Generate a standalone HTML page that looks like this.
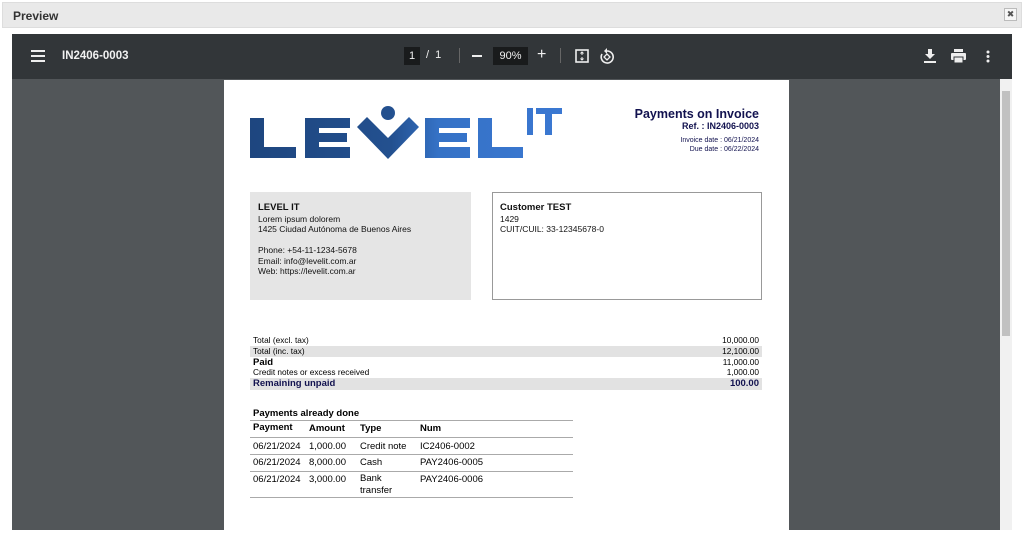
<!DOCTYPE html>
<html><head><meta charset="utf-8"><style>
*{margin:0;padding:0;box-sizing:border-box}
body{width:1024px;height:549px;background:#fff;font-family:"Liberation Sans",sans-serif;position:relative;overflow:hidden}
.top{position:absolute;left:2px;top:2px;width:1020px;height:26px;background:#e9e9e9;border:1px solid #ddd}
.top b{position:absolute;left:10px;top:6px;font-size:12px;color:#333}
.x{position:absolute;right:4px;top:5px;width:13px;height:13px;border:1px solid #bbb;background:#f7f7f7;font-size:9px;text-align:center;line-height:11px;color:#555}
.viewer{position:absolute;left:12px;top:34px;width:1000px;height:496px;background:#525659;overflow:hidden}
.tb{position:absolute;left:0;top:0;width:1000px;height:45px;background:#323639;color:#f1f1f1;font-size:12px}
.page{position:absolute;left:212px;top:46px;width:565px;height:460px;background:#fff;color:#000}
.sb{position:absolute;right:0;top:45px;width:12px;height:451px;background:#f1f1f1}
.sb i{position:absolute;left:2px;top:12px;width:8px;height:245px;background:#c1c1c1}
.a{position:absolute;font-size:8.5px;line-height:10.5px;color:#111}
.row{position:absolute;left:26px;width:512px;height:11px;font-size:8.3px;line-height:11px;padding-left:3px}
.row span{position:absolute;right:3px}
.t td{font-size:9.5px;padding:0 3px;height:17px;vertical-align:top;padding-top:2px}
</style></head><body>
<div class="top"><b>Preview</b><div class="x">✖</div></div>
<div class="viewer">
<div class="tb">
 <svg style="position:absolute;left:19px;top:16px" width="14" height="12"><rect y="0" width="14" height="2" fill="#eee"/><rect y="5" width="14" height="2" fill="#eee"/><rect y="10" width="14" height="2" fill="#eee"/></svg>
 <b style="position:absolute;left:50px;top:16px;font-size:11.5px">IN2406-0003</b>
 <div style="position:absolute;left:392px;top:13px;width:16px;height:18px;background:#191b1c;text-align:center;line-height:18px;font-size:11px">1</div>
 <div style="position:absolute;left:414px;top:15px;font-size:11px">/ &nbsp;1</div>
 <div style="position:absolute;left:447px;top:14px;width:1px;height:15px;background:#666"></div>
 <div style="position:absolute;left:460px;top:21px;width:10px;height:1.5px;background:#eee"></div>
 <div style="position:absolute;left:481px;top:13px;width:35px;height:18px;background:#191b1c;text-align:center;line-height:18px;font-size:11px">90%</div>
 <div style="position:absolute;left:525px;top:12px;font-size:16px">+</div>
 <div style="position:absolute;left:548px;top:14px;width:1px;height:15px;background:#666"></div>
 <svg style="position:absolute;left:563px;top:15px" width="14" height="14"><rect x="1" y="1" width="12" height="12" fill="none" stroke="#eee" stroke-width="1.6"/><path d="M7 3v3M5.5 4.5L7 3l1.5 1.5M7 11V8M5.5 9.5L7 11l1.5-1.5" stroke="#eee" fill="none"/></svg>
 <svg style="position:absolute;left:587px;top:13px" width="16" height="17"><path d="M8 4a6 6 0 1 1-5 3" fill="none" stroke="#eee" stroke-width="1.6"/><path d="M8 1v6L5 4z" fill="#eee"/><path d="M8 7l3 3-3 3-3-3z" fill="none" stroke="#eee" stroke-width="1.3"/></svg>
 <svg style="position:absolute;left:912px;top:15px" width="12" height="14"><path d="M4 0h4v5h3L6 10 1 5h3z" fill="#eee"/><rect y="12" width="12" height="2" fill="#eee"/></svg>
 <svg style="position:absolute;left:939px;top:15px" width="15" height="14"><rect x="3" y="0" width="9" height="3" fill="#eee"/><rect x="0" y="4" width="15" height="7" rx="1" fill="#eee"/><rect x="3" y="8" width="9" height="6" fill="#eee" stroke="#323639"/></svg>
 <svg style="position:absolute;left:974px;top:16px" width="4" height="13"><circle cx="2" cy="2" r="1.5" fill="#eee"/><circle cx="2" cy="6.5" r="1.5" fill="#eee"/><circle cx="2" cy="11" r="1.5" fill="#eee"/></svg>
</div>
<div class="page">
 <svg style="position:absolute;left:0;top:0" width="565" height="90">
  <defs><linearGradient id="g" x1="26" x2="340" gradientUnits="userSpaceOnUse"><stop offset="0" stop-color="#1e467f"/><stop offset="0.45" stop-color="#23508f"/><stop offset="0.6" stop-color="#3572c6"/><stop offset="1" stop-color="#3b78d2"/></linearGradient></defs>
  <g fill="url(#g)">
   <path d="M26 38h14v29h32v11H26z"/>
   <path d="M81 38h45v10H95v5h28v9H95v5h31v11H81z"/>
   <path d="M133 47l10-10 21 21 21-21 10 10-31 32z"/>
   <circle cx="164" cy="33" r="7"/>
   <path d="M201 38h45v10h-31v5h28v9h-28v5h31v11h-45z"/>
   <path d="M254 38h14v29h31v11h-45z"/>
   <path d="M303 28h6V55h-6zM312 28h26v6h-10v21h-7V34h-9z"/>
  </g>
 </svg>
 <div style="position:absolute;right:30px;top:27px;text-align:right;color:#12124f">
  <div style="font-size:12.5px;font-weight:bold;line-height:14px">Payments on Invoice</div>
  <div style="font-size:9px;font-weight:bold;line-height:11px">Ref. : IN2406-0003</div>
  <div style="font-size:7px;line-height:8.5px;margin-top:5px">Invoice date : 06/21/2024<br>Due date : 06/22/2024</div>
 </div>
 <div style="position:absolute;left:26px;top:112px;width:221px;height:108px;background:#e5e5e5"></div>
 <div class="a" style="left:34px;top:122px"><b style="font-size:9.5px">LEVEL IT</b><br>Lorem ipsum dolorem<br>1425 Ciudad Autónoma de Buenos Aires<br><br>Phone: +54-11-1234-5678<br>Email: info@levelit.com.ar<br>Web: https://levelit.com.ar</div>
 <div style="position:absolute;left:268px;top:112px;width:270px;height:108px;border:1px solid #999"></div>
 <div class="a" style="left:276px;top:122px"><b style="font-size:9.5px">Customer TEST</b><br>1429<br>CUIT/CUIL: 33-12345678-0</div>
 <div class="row" style="top:255px">Total (excl. tax)<span>10,000.00</span></div>
 <div class="row" style="top:266px;background:#e2e2e2">Total (inc. tax)<span>12,100.00</span></div>
 <div class="row" style="top:277px"><b style="font-size:9.5px">Paid</b><span>11,000.00</span></div>
 <div class="row" style="top:287px">Credit notes or excess received<span>1,000.00</span></div>
 <div class="row" style="top:298px;height:12px;background:#e2e2e2;color:#12124f;font-weight:bold;font-size:9.5px">Remaining unpaid<span>100.00</span></div>
 <div style="position:absolute;left:29px;top:328px;font-size:9.5px;font-weight:bold">Payments already done</div>
 <table class="t" style="position:absolute;left:26px;top:340px;width:323px;border-collapse:collapse;table-layout:fixed">
  <col style="width:56px"><col style="width:51px"><col style="width:60px"><col>
  <tr style="border-top:1px solid #aaa;border-bottom:1px solid #aaa;font-weight:bold"><td style="height:13px;padding-top:1px">Payment</td><td>Amount</td><td>Type</td><td>Num</td></tr>
  <tr style="border-bottom:1px solid #aaa"><td style="height:17px;padding-top:3px">06/21/2024</td><td style="padding-top:3px">1,000.00</td><td style="padding-top:3px">Credit note</td><td style="padding-top:3px">IC2406-0002</td></tr>
  <tr style="border-bottom:1px solid #aaa"><td style="height:16px">06/21/2024</td><td>8,000.00</td><td>Cash</td><td>PAY2406-0005</td></tr>
  <tr style="border-bottom:1px solid #aaa"><td style="height:25px">06/21/2024</td><td>3,000.00</td><td style="line-height:12px;padding-top:1px">Bank<br>transfer</td><td>PAY2406-0006</td></tr>
 </table>
</div>
<div class="sb"><i></i></div>
</div>
</body></html>
